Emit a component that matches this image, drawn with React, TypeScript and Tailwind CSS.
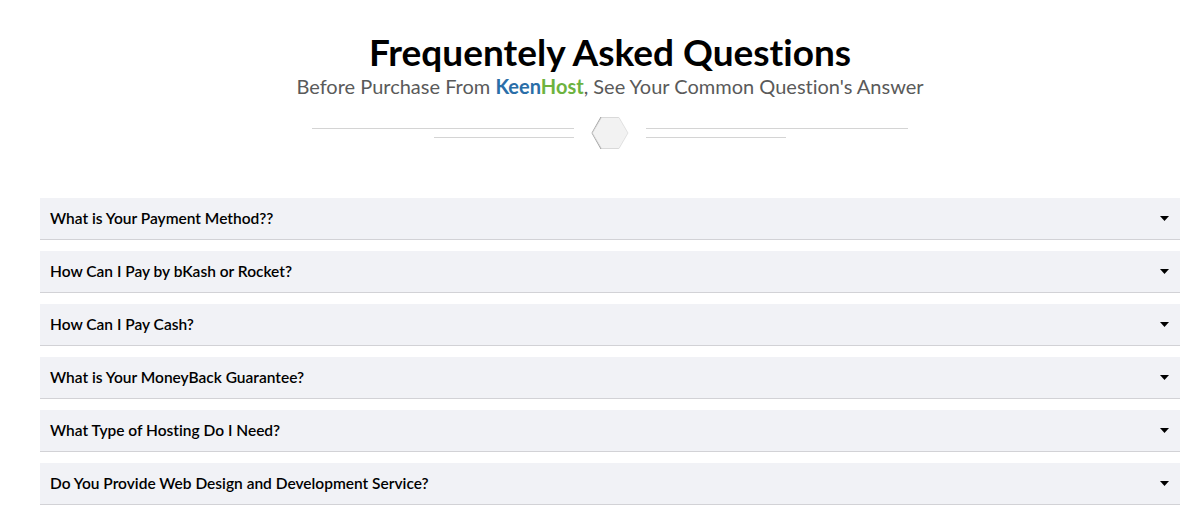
const faqs = [
  "What is Your Payment Method??",
  "How Can I Pay by bKash or Rocket?",
  "How Can I Pay Cash?",
  "What is Your MoneyBack Guarantee?",
  "What Type of Hosting Do I Need?",
  "Do You Provide Web Design and Development Service?",
];

// small hexagon badge between the divider lines
function Hexagon() {
  return (
    <svg width="38" height="34" viewBox="0 0 38 34" className="block">
      <polygon points="9.5,1 27.5,1 36.5,17 27.5,33 9.5,33 0.5,17" fill="#9a9a9a" />
      <polygon points="10.5,1.5 28,1.5 37,17 28,32.5 10.5,32.5 1.5,17" fill="#f2f2f2" stroke="#dedede" strokeWidth="0.8" />
    </svg>
  );
}

function Divider() {
  return (
    <div className="flex items-center justify-center gap-[17px]">
      <div className="flex w-[262px] flex-col items-end gap-2">
        <div className="h-px w-[262px] bg-[#d4d4d4]" />
        <div className="h-px w-[140px] bg-[#d4d4d4]" />
      </div>
      <Hexagon />
      <div className="flex w-[262px] flex-col items-start gap-2">
        <div className="h-px w-[262px] bg-[#d4d4d4]" />
        <div className="h-px w-[140px] bg-[#d4d4d4]" />
      </div>
    </div>
  );
}

export default function App() {
  return (
    <div className="min-h-[531px] w-full bg-white pl-[40px] pr-[20px] font-['Lato',sans-serif] [font-variant-ligatures:none]">
      {/* Heading */}
      <div className="flex flex-col items-center pt-[32px]">
        <h1 className="text-[37px] font-bold leading-[40px] text-black">Frequentely Asked Questions</h1>
        <p className="mt-[2px] text-[20px] leading-[24px] text-[#5a5a5a]">
          Before Purchase From{" "}
          <span className="font-bold text-[#2a6ea8]">Keen</span>
          <span className="font-bold text-[#6db33f]">Host</span>, See Your Common Question's Answer
        </p>
        <div className="mt-[18px]">
          <Divider />
        </div>
      </div>

      {/* Accordion list */}
      <div className="mt-[48px] flex flex-col gap-[11px]">
        {faqs.map((q) => (
          <div
            key={q}
            className="flex h-[42px] items-center justify-between border-b border-[#d2d2d6] bg-[#f1f2f6] pl-[10px] pr-[11px]"
          >
            <span className="text-[15.5px] font-semibold text-black">{q}</span>
            <svg width="9" height="5" viewBox="0 0 9 5">
              <polygon points="0,0 9,0 4.5,5" fill="#000" />
            </svg>
          </div>
        ))}
      </div>
    </div>
  );
}
